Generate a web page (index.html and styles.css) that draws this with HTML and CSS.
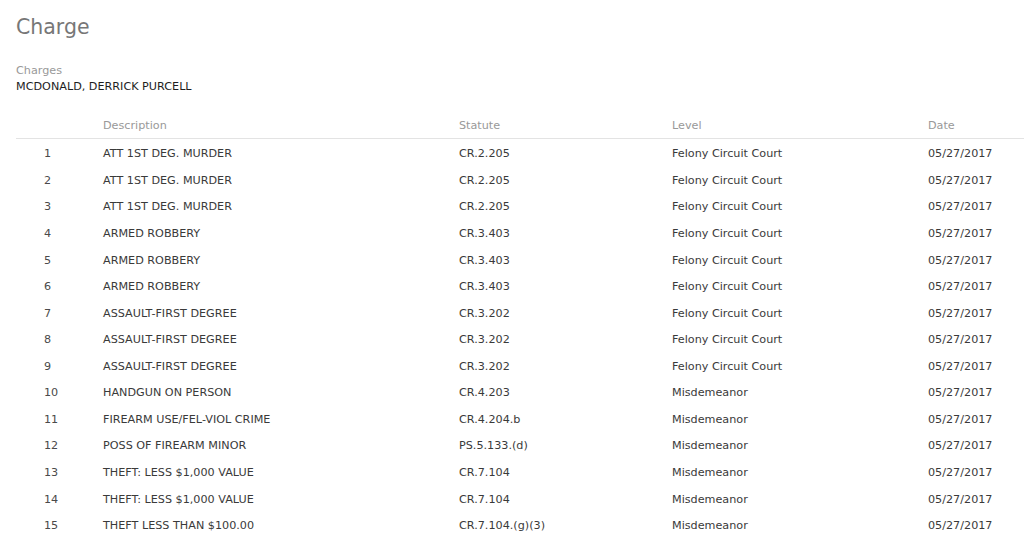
FILE: index.html
```html
<!DOCTYPE html>
<html>
<head>
<meta charset="utf-8">
<link rel="stylesheet" href="styles.css">
</head>
<body>
<div class="page">
  <h1 class="title">Charge</h1>
  <div class="meta">
    <div class="label">Charges</div>
    <div class="name">MCDONALD, DERRICK PURCELL</div>
  </div>
  <div class="table">
    <div class="row head">
      <div class="c num"></div><div class="c">Description</div><div class="c">Statute</div><div class="c">Level</div><div class="c">Date</div>
    </div>
    <div class="row"><div class="c num">1</div><div class="c">ATT 1ST DEG. MURDER</div><div class="c">CR.2.205</div><div class="c">Felony Circuit Court</div><div class="c">05/27/2017</div></div>
    <div class="row"><div class="c num">2</div><div class="c">ATT 1ST DEG. MURDER</div><div class="c">CR.2.205</div><div class="c">Felony Circuit Court</div><div class="c">05/27/2017</div></div>
    <div class="row"><div class="c num">3</div><div class="c">ATT 1ST DEG. MURDER</div><div class="c">CR.2.205</div><div class="c">Felony Circuit Court</div><div class="c">05/27/2017</div></div>
    <div class="row"><div class="c num">4</div><div class="c">ARMED ROBBERY</div><div class="c">CR.3.403</div><div class="c">Felony Circuit Court</div><div class="c">05/27/2017</div></div>
    <div class="row"><div class="c num">5</div><div class="c">ARMED ROBBERY</div><div class="c">CR.3.403</div><div class="c">Felony Circuit Court</div><div class="c">05/27/2017</div></div>
    <div class="row"><div class="c num">6</div><div class="c">ARMED ROBBERY</div><div class="c">CR.3.403</div><div class="c">Felony Circuit Court</div><div class="c">05/27/2017</div></div>
    <div class="row"><div class="c num">7</div><div class="c">ASSAULT-FIRST DEGREE</div><div class="c">CR.3.202</div><div class="c">Felony Circuit Court</div><div class="c">05/27/2017</div></div>
    <div class="row"><div class="c num">8</div><div class="c">ASSAULT-FIRST DEGREE</div><div class="c">CR.3.202</div><div class="c">Felony Circuit Court</div><div class="c">05/27/2017</div></div>
    <div class="row"><div class="c num">9</div><div class="c">ASSAULT-FIRST DEGREE</div><div class="c">CR.3.202</div><div class="c">Felony Circuit Court</div><div class="c">05/27/2017</div></div>
    <div class="row"><div class="c num">10</div><div class="c">HANDGUN ON PERSON</div><div class="c">CR.4.203</div><div class="c">Misdemeanor</div><div class="c">05/27/2017</div></div>
    <div class="row"><div class="c num">11</div><div class="c">FIREARM USE/FEL-VIOL CRIME</div><div class="c">CR.4.204.b</div><div class="c">Misdemeanor</div><div class="c">05/27/2017</div></div>
    <div class="row"><div class="c num">12</div><div class="c">POSS OF FIREARM MINOR</div><div class="c">PS.5.133.(d)</div><div class="c">Misdemeanor</div><div class="c">05/27/2017</div></div>
    <div class="row"><div class="c num">13</div><div class="c">THEFT: LESS $1,000 VALUE</div><div class="c">CR.7.104</div><div class="c">Misdemeanor</div><div class="c">05/27/2017</div></div>
    <div class="row"><div class="c num">14</div><div class="c">THEFT: LESS $1,000 VALUE</div><div class="c">CR.7.104</div><div class="c">Misdemeanor</div><div class="c">05/27/2017</div></div>
    <div class="row"><div class="c num">15</div><div class="c">THEFT LESS THAN $100.00</div><div class="c">CR.7.104.(g)(3)</div><div class="c">Misdemeanor</div><div class="c">05/27/2017</div></div>
  </div>
</div>
</body>
</html>
```
FILE: styles.css
```css
html, body {
  margin: 0;
  padding: 0;
  background: #fff;
}
body {
  font-family: "DejaVu Sans", Verdana, sans-serif;
  color: #3a3a3a;
  font-size: 11.2px;
}
.page {
  padding: 13px 0 0 16px;
}
.title {
  margin: 0;
  font-weight: normal;
  font-size: 20.5px;
  line-height: 28px;
  color: #777;
}
.meta {
  margin-top: 22px;
}
.label {
  color: #999;
  line-height: 15px;
}
.name {
  color: #1e1e1e;
  line-height: 17px;
}
.table {
  margin-top: 19px;
}
.row {
  display: grid;
  grid-template-columns: 87px 356px 213px 256px 1fr;
  height: 26.57px;
  align-items: center;
}
.row.head {
  height: 24px;
  border-bottom: 1px solid #e3e3e3;
  align-items: start;
  color: #999;
  margin-bottom: 1.5px;
}
.row.head .c {
  line-height: 14px;
  padding-top: 5px;
}
.c {
  white-space: nowrap;
}
.num {
  padding-left: 28px;
  color: #4a4a4a;
}
```
